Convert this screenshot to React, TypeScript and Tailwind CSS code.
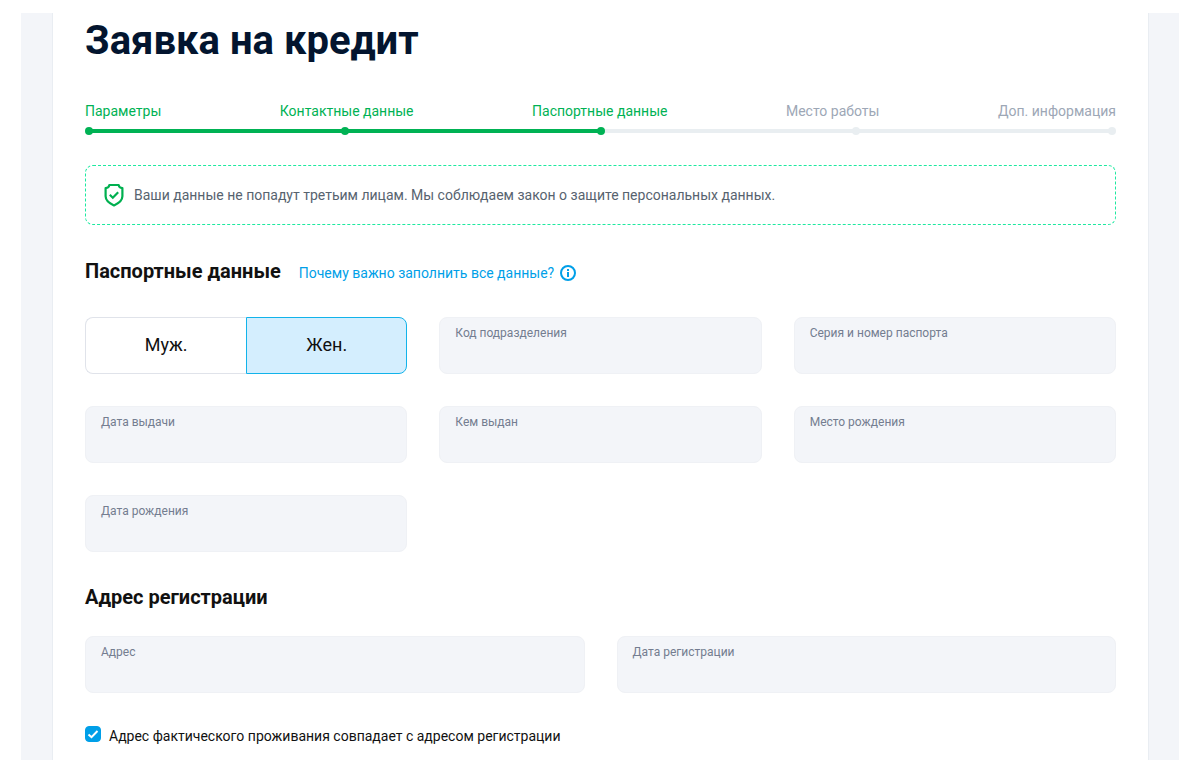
import React, { useState } from 'react';

const steps = ['Параметры', 'Контактные данные', 'Паспортные данные', 'Место работы', 'Доп. информация'];
const currentStep = 2;

const passportFields = [
  { id: 'code', label: 'Код подразделения' },
  { id: 'number', label: 'Серия и номер паспорта' },
  { id: 'issueDate', label: 'Дата выдачи' },
  { id: 'issuedBy', label: 'Кем выдан' },
  { id: 'birthPlace', label: 'Место рождения' },
  { id: 'birthDate', label: 'Дата рождения' },
];

const addressFields = [
  { id: 'address', label: 'Адрес' },
  { id: 'registrationDate', label: 'Дата регистрации' },
];

interface FieldProps {
  id: string;
  label: string;
}

const Field: React.FC<FieldProps> = ({ id, label }) => (
  <div className="flex h-[57px] flex-col rounded-lg border border-[#eff1f5] bg-[#f3f5f9] px-[15px] pt-[7px] focus-within:border-[#00a9ea]">
    <label htmlFor={id} className="text-xs leading-4 text-[#747d90]">
      {label}
    </label>
    <input id={id} name={id} type="text" className="min-w-0 bg-transparent text-base text-[#111] outline-none" />
  </div>
);

const Progress: React.FC = () => (
  <div>
    <ol className="flex justify-between text-sm leading-5">
      {steps.map((step, i) => (
        <li
          key={step}
          aria-current={i === currentStep ? 'step' : undefined}
          className={i <= currentStep ? 'text-[#00b254]' : 'text-[#9da7b6]'}
        >
          {step}
        </li>
      ))}
    </ol>
    <div className="mt-[6px] flex items-center" aria-hidden="true">
      {steps.map((step, i) => (
        <React.Fragment key={step}>
          {i > 0 && (
            <span className={`-mx-1 h-1 flex-1 ${i <= currentStep ? 'bg-[#00b254]' : 'bg-[#e9eef1]'}`} />
          )}
          <span className={`z-10 size-2 rounded-full ${i <= currentStep ? 'bg-[#00b254]' : 'bg-[#e9eef1]'}`} />
        </React.Fragment>
      ))}
    </div>
  </div>
);

const ShieldIcon: React.FC = () => (
  <svg viewBox="0 0 20 24" className="h-6 w-5 shrink-0" fill="none" stroke="#00b050" strokeWidth="2.2" aria-hidden="true">
    <path d="M5.3 2h9.4c.2 1.9 1.5 3 3.7 3.2v8.1c0 3.8-3.4 6.9-8.4 9.2-5-2.3-8.4-5.4-8.4-9.2V5.2c2.2-.2 3.5-1.3 3.7-3.2z" strokeLinejoin="round" />
    <path d="M5.8 11.8l3 2.9 5.4-5.4" />
  </svg>
);

const InfoIcon: React.FC = () => (
  <svg viewBox="0 0 16 16" className="size-4 shrink-0" fill="none" stroke="#009fe8" strokeWidth="2" aria-hidden="true">
    <circle cx="8" cy="8" r="7" />
    <path d="M8 7v5M8 4v2" />
  </svg>
);

const App: React.FC = () => {
  const [gender, setGender] = useState('female');
  const [sameAddress, setSameAddress] = useState(true);

  return (
    <div className="bg-white px-[21px] py-[13px] font-['Roboto','Liberation_Sans',sans-serif]">
      <div className="bg-[#f3f5f9] pr-[30px] pl-[31px]">
        <main className="border-x border-[#e9edf2] bg-white px-8 pt-1 pb-[14px]">
          <h1 className="text-[40px] leading-12 font-bold text-[#03152f]">Заявка на кредит</h1>

          <div className="mt-9">
            <Progress />
          </div>

          <div className="mt-[30px] flex h-[60px] items-center gap-[10px] rounded-lg border border-dashed border-[#1de9a0] px-[18px]">
            <ShieldIcon />
            <p className="text-sm leading-5 text-[#57636f]">
              Ваши данные не попадут третьим лицам. Мы соблюдаем закон о защите персональных данных.
            </p>
          </div>

          <form onSubmit={(e) => e.preventDefault()}>
            <div className="mt-8 flex items-end gap-[18px]">
              <h2 className="text-xl leading-7 font-bold text-[#111]">Паспортные данные</h2>
              <a href="#why" className="flex items-center gap-[6px] text-sm leading-6 text-[#009fe8]">
                Почему важно заполнить все данные?
                <InfoIcon />
              </a>
            </div>

            <div className="mt-8 grid grid-cols-3 gap-8">
              <div className="grid grid-cols-2 text-lg text-[#111]" role="group" aria-label="Пол">
                <button
                  type="button"
                  aria-pressed={gender === 'male'}
                  onClick={() => setGender('male')}
                  className={`rounded-l-lg border pb-[2px] ${
                    gender === 'male' ? 'border-[#12b3ea] bg-[#d4eefe]' : 'border-r-0 border-[#e0e3ea] bg-white'
                  }`}
                >
                  Муж.
                </button>
                <button
                  type="button"
                  aria-pressed={gender === 'female'}
                  onClick={() => setGender('female')}
                  className={`rounded-r-lg border pb-[2px] ${
                    gender === 'female' ? 'border-[#12b3ea] bg-[#d4eefe]' : 'border-l-0 border-[#e0e3ea] bg-white'
                  }`}
                >
                  Жен.
                </button>
              </div>
              {passportFields.map((field) => (
                <Field key={field.id} {...field} />
              ))}
            </div>

            <h2 className="mt-[31px] text-xl leading-7 font-bold text-[#111]">Адрес регистрации</h2>
            <div className="mt-[25px] grid grid-cols-2 gap-8">
              {addressFields.map((field) => (
                <Field key={field.id} {...field} />
              ))}
            </div>

            <div className="mt-[33px] flex items-start gap-2">
              <span className="grid shrink-0">
                <input
                  id="sameAddress"
                  type="checkbox"
                  checked={sameAddress}
                  onChange={(e) => setSameAddress(e.target.checked)}
                  className="col-start-1 row-start-1 size-4 appearance-none rounded-sm border border-[#009fe8] checked:bg-[#009fe8]"
                />
                {sameAddress && (
                  <svg viewBox="0 0 16 16" className="pointer-events-none col-start-1 row-start-1 size-4" fill="none" stroke="#fff" strokeWidth="2" aria-hidden="true">
                    <path d="M3.5 8.5l3 2.7 6-6.2" />
                  </svg>
                )}
              </span>
              <label htmlFor="sameAddress" className="text-sm leading-5 text-[#111]">
                Адрес фактического проживания совпадает с адресом регистрации
              </label>
            </div>
          </form>
        </main>
      </div>
    </div>
  );
};

export default App;
